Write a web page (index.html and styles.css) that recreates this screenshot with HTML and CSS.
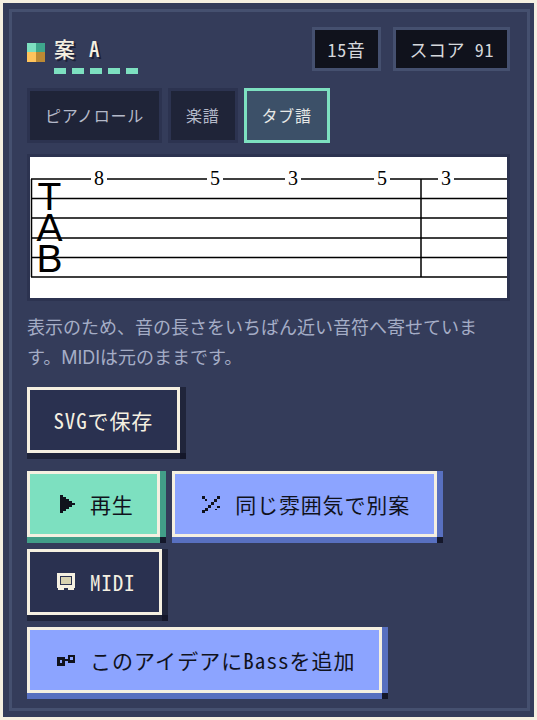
FILE: index.html
```html
<!DOCTYPE html>
<html lang="ja">
<head>
<meta charset="utf-8">
<title>案 A</title>
<link rel="stylesheet" href="styles.css">
</head>
<body>
<main class="panel">
<section class="inner">
  <header class="head">
    <div class="title-wrap">
      <span class="swatch"><i class="s1"></i><i class="s2"></i><i class="s3"></i><i class="s4"></i></span>
      <h1 class="title">案 A</h1>
    </div>
    <div class="badges">
      <span class="badge">15音</span>
      <span class="badge">スコア 91</span>
    </div>
  </header>
  <nav class="tabs">
    <span class="tab">ピアノロール</span>
    <span class="tab">楽譜</span>
    <span class="tab active">タブ譜</span>
  </nav>
  <div class="score">
    <svg class="tabsvg" width="477" height="141" viewBox="0 0 477 141">
      <g class="lines">
        <path d="M1 22H477M1 41.5H477M1 61H477M1 81H477M1 100.5H477M1 120H477M1.5 22V120M391 22V120"/>
      </g>
      <rect class="gap" x="61" y="14" width="16" height="16"/>
      <rect class="gap" x="177" y="14" width="16" height="16"/>
      <rect class="gap" x="255" y="14" width="16" height="16"/>
      <rect class="gap" x="344" y="14" width="16" height="16"/>
      <rect class="gap" x="408" y="14" width="16" height="16"/>
      <text class="clef" x="19.5" y="53">T</text>
      <text class="clef" x="19.5" y="83.5">A</text>
      <text class="clef" x="19.5" y="115">B</text>
      <text class="fret" x="69" y="28">8</text>
      <text class="fret" x="185" y="28">5</text>
      <text class="fret" x="263" y="28">3</text>
      <text class="fret" x="352" y="28">5</text>
      <text class="fret" x="416" y="28">3</text>
    </svg>
  </div>
  <p class="note">表示のため、音の長さをいちばん近い音符へ寄せています。MIDIは元のままです。</p>
  <div class="save-row">
    <button class="btn dark">SVGで保存</button>
  </div>
  <div class="actions">
    <button class="btn mint">
      <svg class="icon" width="18" height="18" viewBox="0 0 18 18"><path class="ink" d="M3 0H6V2H9V4H12V6H15V8H18V10H15V12H12V14H9V16H6V18H3Z"/></svg>
      再生
    </button>
    <button class="btn blue">
      <svg class="icon" width="18" height="18" viewBox="0 0 18 18"><path class="ink" d="M0 1H3V4H0ZM3 4H5V6H3ZM15 1H18V4H15ZM12 4H15V7H12ZM9 7H12V10H9ZM6 10H9V13H6ZM3 13H6V16H3ZM0 15H3V18H0ZM15 11H18V13H15ZM13 14H15V15H13Z"/></svg>
      同じ雰囲気で別案
    </button>
    <button class="btn dark">
      <svg class="icon" width="18" height="18" viewBox="0 0 18 18"><path class="cream" d="M0 0H18V15H17V17H11V15H7V17H1V15H0ZM3 3V12H15V3Z"/><rect class="screen" x="4" y="4" width="10" height="7"/></svg>
      MIDI
    </button>
    <button class="btn blue wide">
      <svg class="icon" width="18" height="18" viewBox="0 0 18 18"><path class="ink" d="M0 6H8V8H11V4H18V12H11V10H8V15H0ZM3 9V12H5V9ZM13 6V9H16V6Z"/></svg>
      このアイデアにBassを追加
    </button>
  </div>
</section>
</main>
</body>
</html>
```
FILE: styles.css
```css
* { box-sizing: border-box; }
html, body { margin: 0; padding: 0; }
body {
  width: 537px;
  height: 720px;
  padding: 3px;
  background: #f5f0e1;
  overflow: hidden;
  font-family: "Noto Sans CJK JP", sans-serif;
  font-feature-settings: "hwid";
}
.panel {
  height: 714px;
  padding: 6px 4px 6px 6px;
  background: #343c5a;
}
.inner {
  height: 100%;
  border: 3px solid #45506f;
  padding: 15px 17px 0 15px;
}
.head {
  display: flex;
  justify-content: space-between;
  align-items: flex-start;
  height: 44px;
}
.title-wrap {
  display: flex;
  align-items: flex-start;
  gap: 9px;
}
.swatch {
  display: grid;
  grid-template-columns: 9px 9px;
  grid-template-rows: 9px 10px;
  margin-top: 16px;
}
.swatch i { display: block; }
.s1 { background: #7de0c0; }
.s2 { background: #3ea78c; }
.s3 { background: #ffc45c; }
.s4 { background: #bc8a34; }
.title {
  margin: 8px 0 0;
  height: 39px;
  width: 84px;
  font-size: 21px;
  font-weight: 500;
  line-height: 27px;
  letter-spacing: 0.7px;
  word-spacing: 2px;
  color: #f5f0e1;
  text-shadow: 2px 2px 0 #1c2036;
  background: repeating-linear-gradient(90deg, #7de0c0 0 12px, transparent 12px 18px) left bottom / 84px 6px no-repeat;
}
.badges { display: flex; gap: 12px; }
.badge {
  height: 44px;
  border: 3px solid #45506f;
  background: #10121c;
  color: #d6d8dc;
  font-size: 18px;
  line-height: 38px;
  padding: 0 13px;
  letter-spacing: 0.6px;
}
.tabs {
  display: flex;
  gap: 6px;
  margin-top: 17px;
}
.tab {
  height: 55px;
  border: 3px solid #2c3350;
  background: #1f2438;
  color: #b4b9c9;
  font-size: 16px;
  line-height: 49px;
  letter-spacing: 0.75px;
  padding: 0 15px;
}
.tab.active {
  border-color: #7de0c0;
  background: #3c5068;
  color: #e6e8e6;
}
.score {
  margin-top: 11px;
  width: 483px;
  height: 147px;
  border: 3px solid #2c3350;
  background: #fff;
}
.tabsvg { display: block; }
.lines path { fill: none; stroke: #000; stroke-width: 1.5; }
.gap { fill: #fff; }
.clef {
  font-family: "Liberation Sans", sans-serif;
  font-size: 39px;
  text-anchor: middle;
  fill: #000;
}
.fret {
  font-family: "Liberation Serif", serif;
  font-size: 20px;
  text-anchor: middle;
  fill: #000;
}
.note {
  margin: 12px 0 0;
  width: 460px;
  font-family: Inter, "Noto Sans CJK JP", sans-serif;
  font-feature-settings: normal;
  font-size: 18px;
  line-height: 30px;
  color: #a5adc6;
}
.save-row { margin-top: 14px; }
.actions {
  display: flex;
  flex-wrap: wrap;
  gap: 12px;
  margin-top: 18px;
}
.btn {
  display: inline-flex;
  align-items: center;
  gap: 15px;
  height: 66px;
  padding: 0 23.5px 0 27px;
  border: 3px solid #f5f0e1;
  font-family: inherit;
  font-feature-settings: inherit;
  font-size: 21px;
  letter-spacing: 0.85px;
  line-height: 1;
}
.btn.wide { letter-spacing: 1.05px; }
.btn.dark {
  background: #2a3150;
  color: #f5f0e1;
  box-shadow: 6px 0 0 #20253b, 0 6px 0 #20253b, 6px 6px 0 #14172a;
}
.save-row .btn { padding: 0 23.5px; }
.btn.mint {
  background: #7de0c0;
  color: #10121c;
  box-shadow: 6px 0 0 #429e88, 0 6px 0 #429e88, 6px 6px 0 #14172a;
}
.btn.blue {
  background: #8ca4ff;
  color: #10121c;
  box-shadow: 6px 0 0 #5870c0, 0 6px 0 #5870c0, 6px 6px 0 #14172a;
}
.icon { display: block; flex: none; shape-rendering: crispEdges; }
.ink { fill: #10121c; }
.cream { fill: #f5f0e1; }
.screen { fill: #d8d2b0; }
```
